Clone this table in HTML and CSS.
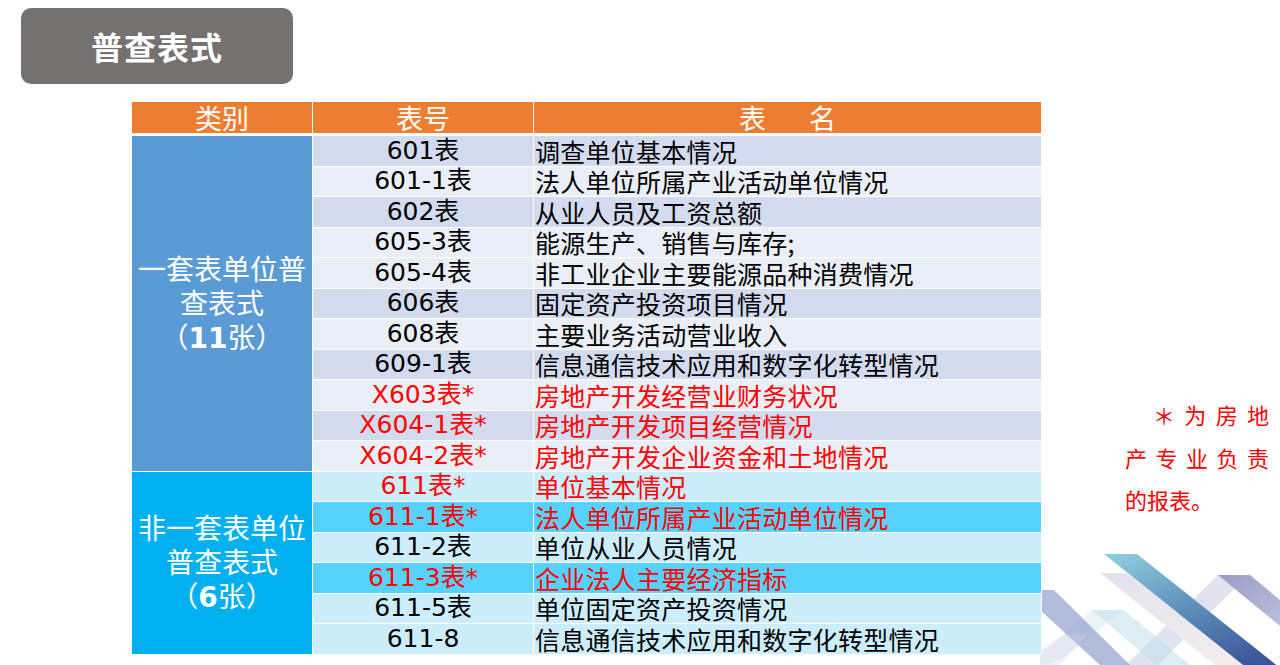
FILE: index.html
```html
<!DOCTYPE html>
<html lang="zh-CN">
<head>
<meta charset="utf-8">
<title>普查表式</title>
<link rel="stylesheet" href="styles.css">
</head>
<body>
<div class="page">
  <div class="title">普查表式</div>
  <div class="content">
    <table class="grid">
      <colgroup><col class="c1"><col class="c2"><col class="c3"></colgroup>
      <thead>
        <tr><th>类别</th><th>表号</th><th>表<span class="gap"></span>名</th></tr>
      </thead>
      <tbody>
        <tr class="d1">
          <td class="cat cat1" rowspan="11"><div>一套表单位普查表式</div><div class="cnt"><span class="pl">（</span><b>11</b>张<span class="pr">）</span></div></td>
          <td class="num">601表</td><td class="name">调查单位基本情况</td></tr>
        <tr class="l1"><td class="num">601-1表</td><td class="name">法人单位所属产业活动单位情况</td></tr>
        <tr class="d1"><td class="num">602表</td><td class="name">从业人员及工资总额</td></tr>
        <tr class="l1"><td class="num">605-3表</td><td class="name">能源生产、销售与库存;</td></tr>
        <tr class="l1 join"><td class="num">605-4表</td><td class="name">非工业企业主要能源品种消费情况</td></tr>
        <tr class="d1"><td class="num">606表</td><td class="name">固定资产投资项目情况</td></tr>
        <tr class="l1"><td class="num">608表</td><td class="name">主要业务活动营业收入</td></tr>
        <tr class="d1"><td class="num">609-1表</td><td class="name">信息通信技术应用和数字化转型情况</td></tr>
        <tr class="l1 red"><td class="num">X603表*</td><td class="name">房地产开发经营业财务状况</td></tr>
        <tr class="d1 red"><td class="num">X604-1表*</td><td class="name">房地产开发项目经营情况</td></tr>
        <tr class="l1 red"><td class="num">X604-2表*</td><td class="name">房地产开发企业资金和土地情况</td></tr>
        <tr class="l2 red">
          <td class="cat cat2" rowspan="6"><div>非一套表单位普查表式</div><div class="cnt"><span class="pl">（</span><b>6</b>张<span class="pr">）</span></div></td>
          <td class="num">611表*</td><td class="name">单位基本情况</td></tr>
        <tr class="d2 red"><td class="num">611-1表*</td><td class="name">法人单位所属产业活动单位情况</td></tr>
        <tr class="l2"><td class="num">611-2表</td><td class="name">单位从业人员情况</td></tr>
        <tr class="d2 red"><td class="num">611-3表*</td><td class="name">企业法人主要经济指标</td></tr>
        <tr class="l2"><td class="num">611-5表</td><td class="name">单位固定资产投资情况</td></tr>
        <tr class="l2"><td class="num">611-8</td><td class="name">信息通信技术应用和数字化转型情况</td></tr>
      </tbody>
    </table>
    <div class="note">
      <div class="nl first">＊为房地</div>
      <div class="nl">产专业负责</div>
      <div class="nl last">的报表。</div>
    </div>
  </div>
  <svg class="deco" width="240" height="115" viewBox="0 0 240 115">
    <defs>
      <linearGradient id="gMain" x1="0" y1="0" x2="0.6" y2="1">
        <stop offset="0" stop-color="#93D0E0"/>
        <stop offset="0.5" stop-color="#5F92BC"/>
        <stop offset="1" stop-color="#3C5699"/>
      </linearGradient>
      <linearGradient id="gPurp" x1="0" y1="0" x2="1" y2="1">
        <stop offset="0" stop-color="#9A9CC8"/>
        <stop offset="1" stop-color="#B9C0DA"/>
      </linearGradient>
      <linearGradient id="gLav" x1="0" y1="0" x2="0" y2="1">
        <stop offset="0" stop-color="#E4E3EE"/>
        <stop offset="1" stop-color="#F3EDEC"/>
      </linearGradient>
    </defs>
    <polygon points="178,25 208,25 118,115 86,115" fill="#DADCEE" opacity="0.8"/>
    <polygon points="60,23 87,23 202,115 175,115" fill="url(#gLav)"/>
    <polygon points="64,4 97,4 240,118 240,130 203,115" fill="url(#gMain)"/>
    <polygon points="178,25 210,25 240,50 240,76" fill="url(#gPurp)"/>
    <polygon points="52,60 84,60 20,110 0,115 0,104" fill="#C7E3EC" opacity="0.35"/>
    <polygon points="52,60 84,60 150,115 116,115" fill="#BFDDE8" opacity="0.5"/>
    <polygon points="0,40 14,40 90,115 60,115 0,60" fill="#8B98C6" opacity="0.65"/>
    <polygon points="0,100 25,84 48,84 20,115 0,115" fill="#D6D4E8" opacity="0.35"/>
  </svg>
</div>
</body>
</html>
```

FILE: styles.css
```css
html, body {
  margin: 0;
  padding: 0;
  background: #ffffff;
}

.page {
  position: relative;
  width: 1280px;
  height: 665px;
  overflow: hidden;
  background: #ffffff;
  font-family: "Noto Sans CJK SC", sans-serif;
}

.title {
  margin: 8px 0 0 21px;
  width: 272px;
  height: 76px;
  border-radius: 10px;
  background: #767171;
  color: #ffffff;
  font-size: 32px;
  font-weight: bold;
  display: flex;
  align-items: center;
  justify-content: center;
  letter-spacing: 1px;
}

.content {
  position: relative;
  z-index: 1;
  display: flex;
  align-items: flex-start;
  margin-top: 17px;
  padding-left: 131px;
}

.grid {
  width: 910px;
  table-layout: fixed;
  border-collapse: collapse;
  font-family: "DejaVu Sans", "Noto Sans CJK SC", sans-serif;
}

.c1 { width: 181px; }
.c2 { width: 221px; }
.c3 { width: 508px; }

.grid th {
  background: #ED7D31;
  color: #ffffff;
  font-family: "Noto Sans CJK SC", sans-serif;
  font-weight: normal;
  font-size: 27px;
  height: 31px;
  padding: 0;
  line-height: 31px;
  border: 1px solid #ffffff;
  border-bottom: 3px solid #ffffff;
}

.gap {
  display: inline-block;
  width: 43px;
}

.grid td {
  padding: 0;
  height: 29.5px;
  border: 1px solid #ffffff;
  font-size: 25px;
  line-height: 28px;
  color: #000000;
  white-space: nowrap;
}

.grid td.num {
  text-align: center;
}

.grid td.name {
  padding-left: 1px;
  letter-spacing: 0.25px;
  font-family: "Noto Sans CJK SC", sans-serif;
  font-size: 25px;
}

.grid td.cat {
  color: #ffffff;
  text-align: center;
  font-family: "Noto Sans CJK SC", sans-serif;
  font-size: 28px;
  line-height: 34px;
  white-space: normal;
  padding: 0 4px;
}

.cnt {
  white-space: nowrap;
}

.pl, .pr {
  display: inline-block;
  width: 28px;
}

.pl { text-align: right; }
.pr { text-align: left; }

.grid td.cat b {
  font-family: "DejaVu Sans", sans-serif;
  font-weight: bold;
}

.cat1 { background: #5B9BD5; }
.cat2 { background: #00B0F0; }

.d1 td.num, .d1 td.name { background: #D2DCEE; }
.l1 td.num, .l1 td.name { background: #E9EEF7; }
.l2 td.num, .l2 td.name { background: #CCEDFC; }
.d2 td.num, .d2 td.name { background: #57D2FE; }

.join td.num, .join td.name {
  border-top-color: #E9EEF7;
}

.red td.num, .red td.name {
  color: #FF0000;
}

.note {
  width: 144px;
  margin-left: 83px;
  margin-top: 292px;
  color: #FF0000;
  font-size: 22px;
  line-height: 42.5px;
}

.nl {
  text-align: justify;
  text-align-last: justify;
}

.nl.first {
  padding-left: 28px;
}

.nl.last {
  text-align: left;
  text-align-last: left;
}

.deco {
  position: absolute;
  left: 1040px;
  top: 550px;
  z-index: 0;
}
```
